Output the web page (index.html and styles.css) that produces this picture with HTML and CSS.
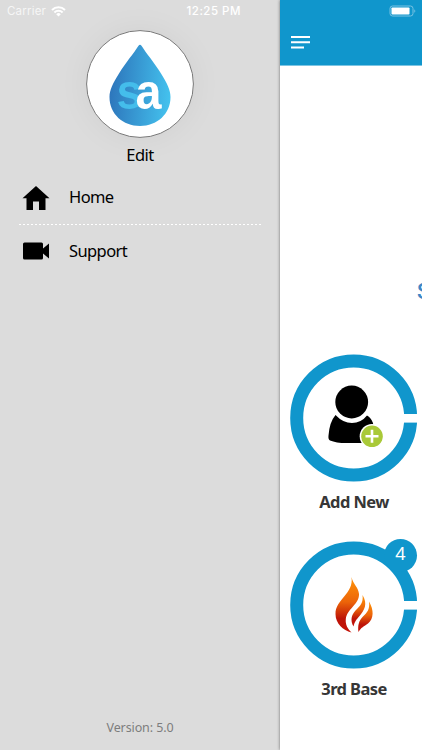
FILE: index.html
```html
<!DOCTYPE html>
<html lang="en">
<head>
    <meta charset="UTF-8">
    <meta name="viewport" content="width=device-width, initial-scale=1.0">
    <title>Menu</title>
    <link rel="stylesheet" href="styles.css">
</head>
<body>
    <div class="app">
        <aside class="drawer">
            <div class="status">
                <span class="carrier">Carrier</span>
                <svg class="wifi" width="15" height="11" viewBox="0 0 15 11">
                    <path d="M1 4a9.200 9.200 0 0 1 13 0M3.400 6.500a5.800 5.800 0 0 1 8.200 0" fill="none" stroke="#fff" stroke-width="2"/>
                    <path d="M7.500 10.600L5.200 8.300a3.200 3.200 0 0 1 4.600 0z" fill="#fff"/>
                </svg>
                <span class="time">12:25 PM</span>
            </div>

            <div class="profile">
                <div class="avatar">
                    <svg width="108" height="108" viewBox="0 0 108 108">
                        <defs>
                            <linearGradient id="drop" x1="0" y1="0.5" x2="1" y2="0.6">
                                <stop offset="0" stop-color="#2d75bb"/>
                                <stop offset="1" stop-color="#44c2ee"/>
                            </linearGradient>
                        </defs>
                        <circle cx="54" cy="54" r="53.4" fill="#fff" stroke="#777" stroke-width="1"/>
                        <path d="M52.500 15.800Q54 13.800 55.500 15.800C60 23 68.500 33 75 43.500C81 53 84.500 60 84.500 67C84.500 84 71 96 54 96C37 96 23.500 84 23.500 67C23.500 60 27 53 33 43.500C39.500 33 48 23 52.500 15.800Z" fill="url(#drop)"/>
                        <text class="logo-text" x="30.500" y="78.500" textLength="26" lengthAdjust="spacingAndGlyphs" fill="#44bdeb">s</text>
                        <text class="logo-text" x="49.500" y="78.500" textLength="26" lengthAdjust="spacingAndGlyphs" fill="#fff">a</text>
                    </svg>
                </div>
                <span class="edit">Edit</span>
            </div>

            <nav class="menu">
                <a class="menu-item">
                    <svg width="28" height="26" viewBox="0 0 28 26">
                        <path d="M14 1L27.500 13.300H23.500V25H17V16.500H11V25H4.500V13.300H.5Z"/>
                    </svg>
                    <span>Home</span>
                </a>
                <a class="menu-item">
                    <svg width="28" height="26" viewBox="0 0 28 26">
                        <path d="M2.500 4.500H19.500Q21 4.500 21 6V10.500L27 5.500V20.500L21 15.500V20Q21 21.500 19.500 21.500H2.500Q1 21.500 1 20V6Q1 4.500 2.500 4.500Z"/>
                    </svg>
                    <span>Support</span>
                </a>
            </nav>

            <div class="version">Version: 5.0</div>
        </aside>

        <main class="page">
            <header class="topbar">
                <svg class="battery" width="28" height="12" viewBox="0 0 28 12">
                    <rect x="1" y="1" width="23" height="10" rx="2.500" fill="none" stroke="#79c3e3" stroke-width="1"/>
                    <rect x="2.500" y="2.500" width="18" height="7" rx=".8" fill="#fff"/>
                    <path d="M25.300 4.200q2 1.800 0 3.600z" fill="#79c3e3"/>
                </svg>
                <svg class="burger" width="19" height="13" viewBox="0 0 19 13">
                    <path d="M0 1H19M0 6.200H19M0 11.400H13" stroke="#fff" stroke-width="2"/>
                </svg>
            </header>

            <div class="heading">Select</div>

            <div class="tile">
                <svg width="128" height="128" viewBox="0 0 128 128">
                    <circle cx="63.700" cy="64" r="57" fill="none" stroke="#1096cc" stroke-width="13"/>
                    <rect x="112" y="60" width="16" height="8.600" fill="#fff"/>
                    <path d="M45.500 61Q53 69 62 69Q71 69 77 61.500Q81 63.500 83 69L85 89H60Q47 89.500 40 86.500Q38 85.500 38.500 81.500Q39.500 68 45.500 61Z"/>
                    <circle cx="61.700" cy="48" r="16.400"/>
                    <circle cx="82" cy="82.300" r="12.300" fill="#fff"/>
                    <circle cx="82" cy="82.300" r="10.800" fill="#a9c938"/>
                    <path d="M75.500 82.300H88.500M82 75.800V88.800" stroke="#fff" stroke-width="2.600"/>
                </svg>
                <span class="tile-name">Add New</span>
            </div>

            <div class="tile">
                <svg width="128" height="128" viewBox="0 0 128 128">
                    <defs>
                        <linearGradient id="flame" x1="0" y1="0" x2="0" y2="1">
                            <stop offset="0.100" stop-color="#fb8a08"/>
                            <stop offset="0.450" stop-color="#ec6409"/>
                            <stop offset="0.750" stop-color="#bd1408"/>
                            <stop offset="1" stop-color="#c41208"/>
                        </linearGradient>
                    </defs>
                    <circle cx="63.700" cy="64" r="57" fill="none" stroke="#1096cc" stroke-width="13"/>
                    <rect x="112" y="60" width="16" height="8.600" fill="#fff"/>
                    <path fill="url(#flame)" d="M61.500 36C63 43 68.500 46.500 69 53C69.500 63 57 68 55.800 78C55.300 84 57.500 87.500 61.500 91.500C53 89.500 45.500 82.500 45.500 73C45.500 58 64 53 61.500 36Z"/>
                    <path fill="url(#flame)" d="M72.500 54C78 63 74.500 69 69.500 75C66.500 78.500 64.500 80.500 63.500 85.500C60 79 61.500 74 65.500 69.500C70.500 64.500 73.500 61.500 72.500 54Z"/>
                    <path fill="url(#flame)" d="M79 60.500C84 69 84 77.500 78 82.500C74 85.500 71 86.500 68.500 91C67.500 84.500 69 79.500 72.500 76C77.500 71.500 80 68 79 60.500Z"/>
                </svg>
                <span class="badge">4</span>
                <span class="tile-name">3rd Base</span>
            </div>
        </main>
    </div>
</body>
</html>
```
FILE: styles.css
```css
* {
    margin: 0;
    padding: 0;
    box-sizing: border-box;
}

body {
    font-family: "Noto Sans", "Open Sans", sans-serif;
    background: #fff;
    overflow: hidden;
}

svg {
    display: block;
    flex: none;
}

.app {
    display: flex;
    width: 422px;
    height: 750px;
    overflow: hidden;
}

.drawer {
    width: 280px;
    flex: none;
    display: flex;
    flex-direction: column;
    background: #dcdcdc;
}

.status {
    display: flex;
    align-items: center;
    height: 22px;
    padding: 0 39px 0 7px;
    color: #fff;
    font-family: Inter, sans-serif;
    font-size: 11.5px;
}

.carrier {
    opacity: 0.75;
    letter-spacing: 0.2px;
}

.wifi {
    margin-left: 5px;
}

.time {
    margin-left: auto;
    font-weight: 500;
    letter-spacing: 0.5px;
}

.profile {
    display: flex;
    flex-direction: column;
    align-items: center;
    padding-top: 8px;
}

.avatar {
    border-radius: 50%;
    box-shadow: 0 0 32px rgba(0, 0, 0, 0.05);
}

.logo-text {
    font-family: "Liberation Sans", sans-serif;
    font-size: 50px;
    font-weight: bold;
}

.edit {
    margin-top: 5px;
    font-size: 16.5px;
    line-height: 23px;
    letter-spacing: -0.5px;
}

.menu {
    padding: 5px 18px 0 19px;
}

.menu-item {
    display: flex;
    align-items: center;
    gap: 19px;
    height: 53px;
    padding-left: 3px;
    font-size: 16.5px;
    letter-spacing: -0.6px;
}

.menu-item span {
    padding-bottom: 2px;
}

.menu-item + .menu-item {
    height: 54px;
    background: repeating-linear-gradient(90deg, #fff 0 2.5px, transparent 2.5px 4px) top / 100% 1px no-repeat;
}

.version {
    margin-top: auto;
    padding-bottom: 13px;
    text-align: center;
    color: #7d7d7d;
    font-size: 12.5px;
    line-height: 18px;
    letter-spacing: -0.1px;
}

.page {
    width: 142px;
    flex: none;
    background: #fff;
    overflow: hidden;
    box-shadow: 0 0 3px rgba(0, 0, 0, 0.5);
}

.topbar {
    height: 66px;
    padding: 5px 5px 0 11px;
    background: #1096cc;
    border-bottom: 1px solid #7cc5e3;
}

.battery {
    margin-left: auto;
}

.burger {
    margin-top: 19px;
}

.heading {
    height: 288px;
    padding: 210px 0 0 137px;
    color: #3d86c6;
    font-family: Roboto, sans-serif;
    font-size: 22px;
    font-weight: 500;
    line-height: 32px;
    white-space: nowrap;
}

.tile {
    position: relative;
    display: flex;
    flex-direction: column;
    align-items: center;
    width: 128px;
    height: 186.5px;
    margin-left: 10px;
}

.tile-name {
    margin-top: 8px;
    color: #363636;
    font-size: 16.5px;
    font-weight: 700;
    line-height: 24px;
    letter-spacing: -0.6px;
    white-space: nowrap;
}

/* unread count over the ring */
.badge {
    position: absolute;
    top: -2px;
    right: 1px;
    width: 33px;
    height: 33px;
    border-radius: 50%;
    background: #1096cc;
    color: #fff;
    font-size: 18px;
    line-height: 29px;
    text-align: center;
}
```
